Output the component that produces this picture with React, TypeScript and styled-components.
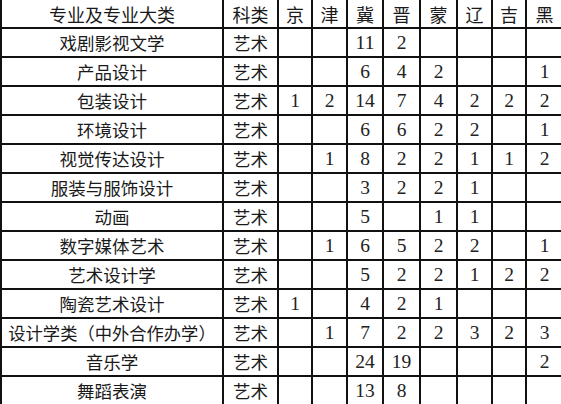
import React from "react";
import styled, { createGlobalStyle } from "styled-components";

const GlobalStyle = createGlobalStyle`
  html, body {
    margin: 0;
    padding: 0;
    background: #ffffff;
    overflow: hidden;
  }
`;

const provinces = ["京", "津", "冀", "晋", "蒙", "辽", "吉", "黑"];

type Row = { name: string; kind: string; counts: (number | null)[] };

const rows: Row[] = [
  { name: "戏剧影视文学", kind: "艺术", counts: [null, null, 11, 2, null, null, null, null] },
  { name: "产品设计", kind: "艺术", counts: [null, null, 6, 4, 2, null, null, 1] },
  { name: "包装设计", kind: "艺术", counts: [1, 2, 14, 7, 4, 2, 2, 2] },
  { name: "环境设计", kind: "艺术", counts: [null, null, 6, 6, 2, 2, null, 1] },
  { name: "视觉传达设计", kind: "艺术", counts: [null, 1, 8, 2, 2, 1, 1, 2] },
  { name: "服装与服饰设计", kind: "艺术", counts: [null, null, 3, 2, 2, 1, null, null] },
  { name: "动画", kind: "艺术", counts: [null, null, 5, null, 1, 1, null, null] },
  { name: "数字媒体艺术", kind: "艺术", counts: [null, 1, 6, 5, 2, 2, null, 1] },
  { name: "艺术设计学", kind: "艺术", counts: [null, null, 5, 2, 2, 1, 2, 2] },
  { name: "陶瓷艺术设计", kind: "艺术", counts: [1, null, 4, 2, 1, null, null, null] },
  { name: "设计学类（中外合作办学）", kind: "艺术", counts: [null, 1, 7, 2, 2, 3, 2, 3] },
  { name: "音乐学", kind: "艺术", counts: [null, null, 24, 19, null, null, null, 2] },
  { name: "舞蹈表演", kind: "艺术", counts: [null, null, 13, 8, null, null, null, null] },
];

const colWidths = [222, 55, 34, 35, 36, 37, 37, 35, 34, 37];

const Table = styled.table`
  border-collapse: collapse;
  table-layout: fixed;
  width: 563px;
  margin-top: -1px;
`;

const HeadCell = styled.th`
  height: 27px;
  padding: 0;
  border: 2px solid #111111;
  border-top: 1px solid #9a9a9a;
  font-family: "Noto Sans CJK SC", "Noto Sans", sans-serif;
  font-size: 18px;
  font-weight: 400;
  color: #1a1a1a;
  text-align: center;
  vertical-align: middle;
  line-height: 1;
  white-space: nowrap;
`;

const TextCell = styled.td<{ $tight?: boolean }>`
  height: 27px;
  padding: 0;
  border: 2px solid #111111;
  font-family: "Noto Sans CJK SC", "Noto Sans", sans-serif;
  font-size: ${(p) => (p.$tight ? "17.3px" : "17.5px")};
  color: #1a1a1a;
  text-align: center;
  vertical-align: middle;
  line-height: 1;
  white-space: nowrap;
  overflow: hidden;
`;

const NumCell = styled.td`
  height: 27px;
  padding: 0;
  border: 2px solid #111111;
  font-family: "Liberation Serif", "Times New Roman", serif;
  font-size: 19.5px;
  color: #222222;
  text-align: center;
  vertical-align: middle;
  line-height: 1;
`;

export default function App() {
  return (
    <>
      <GlobalStyle />
      <Table>
        <colgroup>
          {colWidths.map((w, i) => (
            <col key={i} style={{ width: w }} />
          ))}
        </colgroup>
        <thead>
          <tr>
            <HeadCell>专业及专业大类</HeadCell>
            <HeadCell>科类</HeadCell>
            {provinces.map((p) => (
              <HeadCell key={p}>{p}</HeadCell>
            ))}
          </tr>
        </thead>
        <tbody>
          {rows.map((r) => (
            <tr key={r.name}>
              <TextCell $tight={r.name.length > 10}>{r.name}</TextCell>
              <TextCell>{r.kind}</TextCell>
              {r.counts.map((c, i) => (
                <NumCell key={i}>{c ?? ""}</NumCell>
              ))}
            </tr>
          ))}
        </tbody>
      </Table>
    </>
  );
}
